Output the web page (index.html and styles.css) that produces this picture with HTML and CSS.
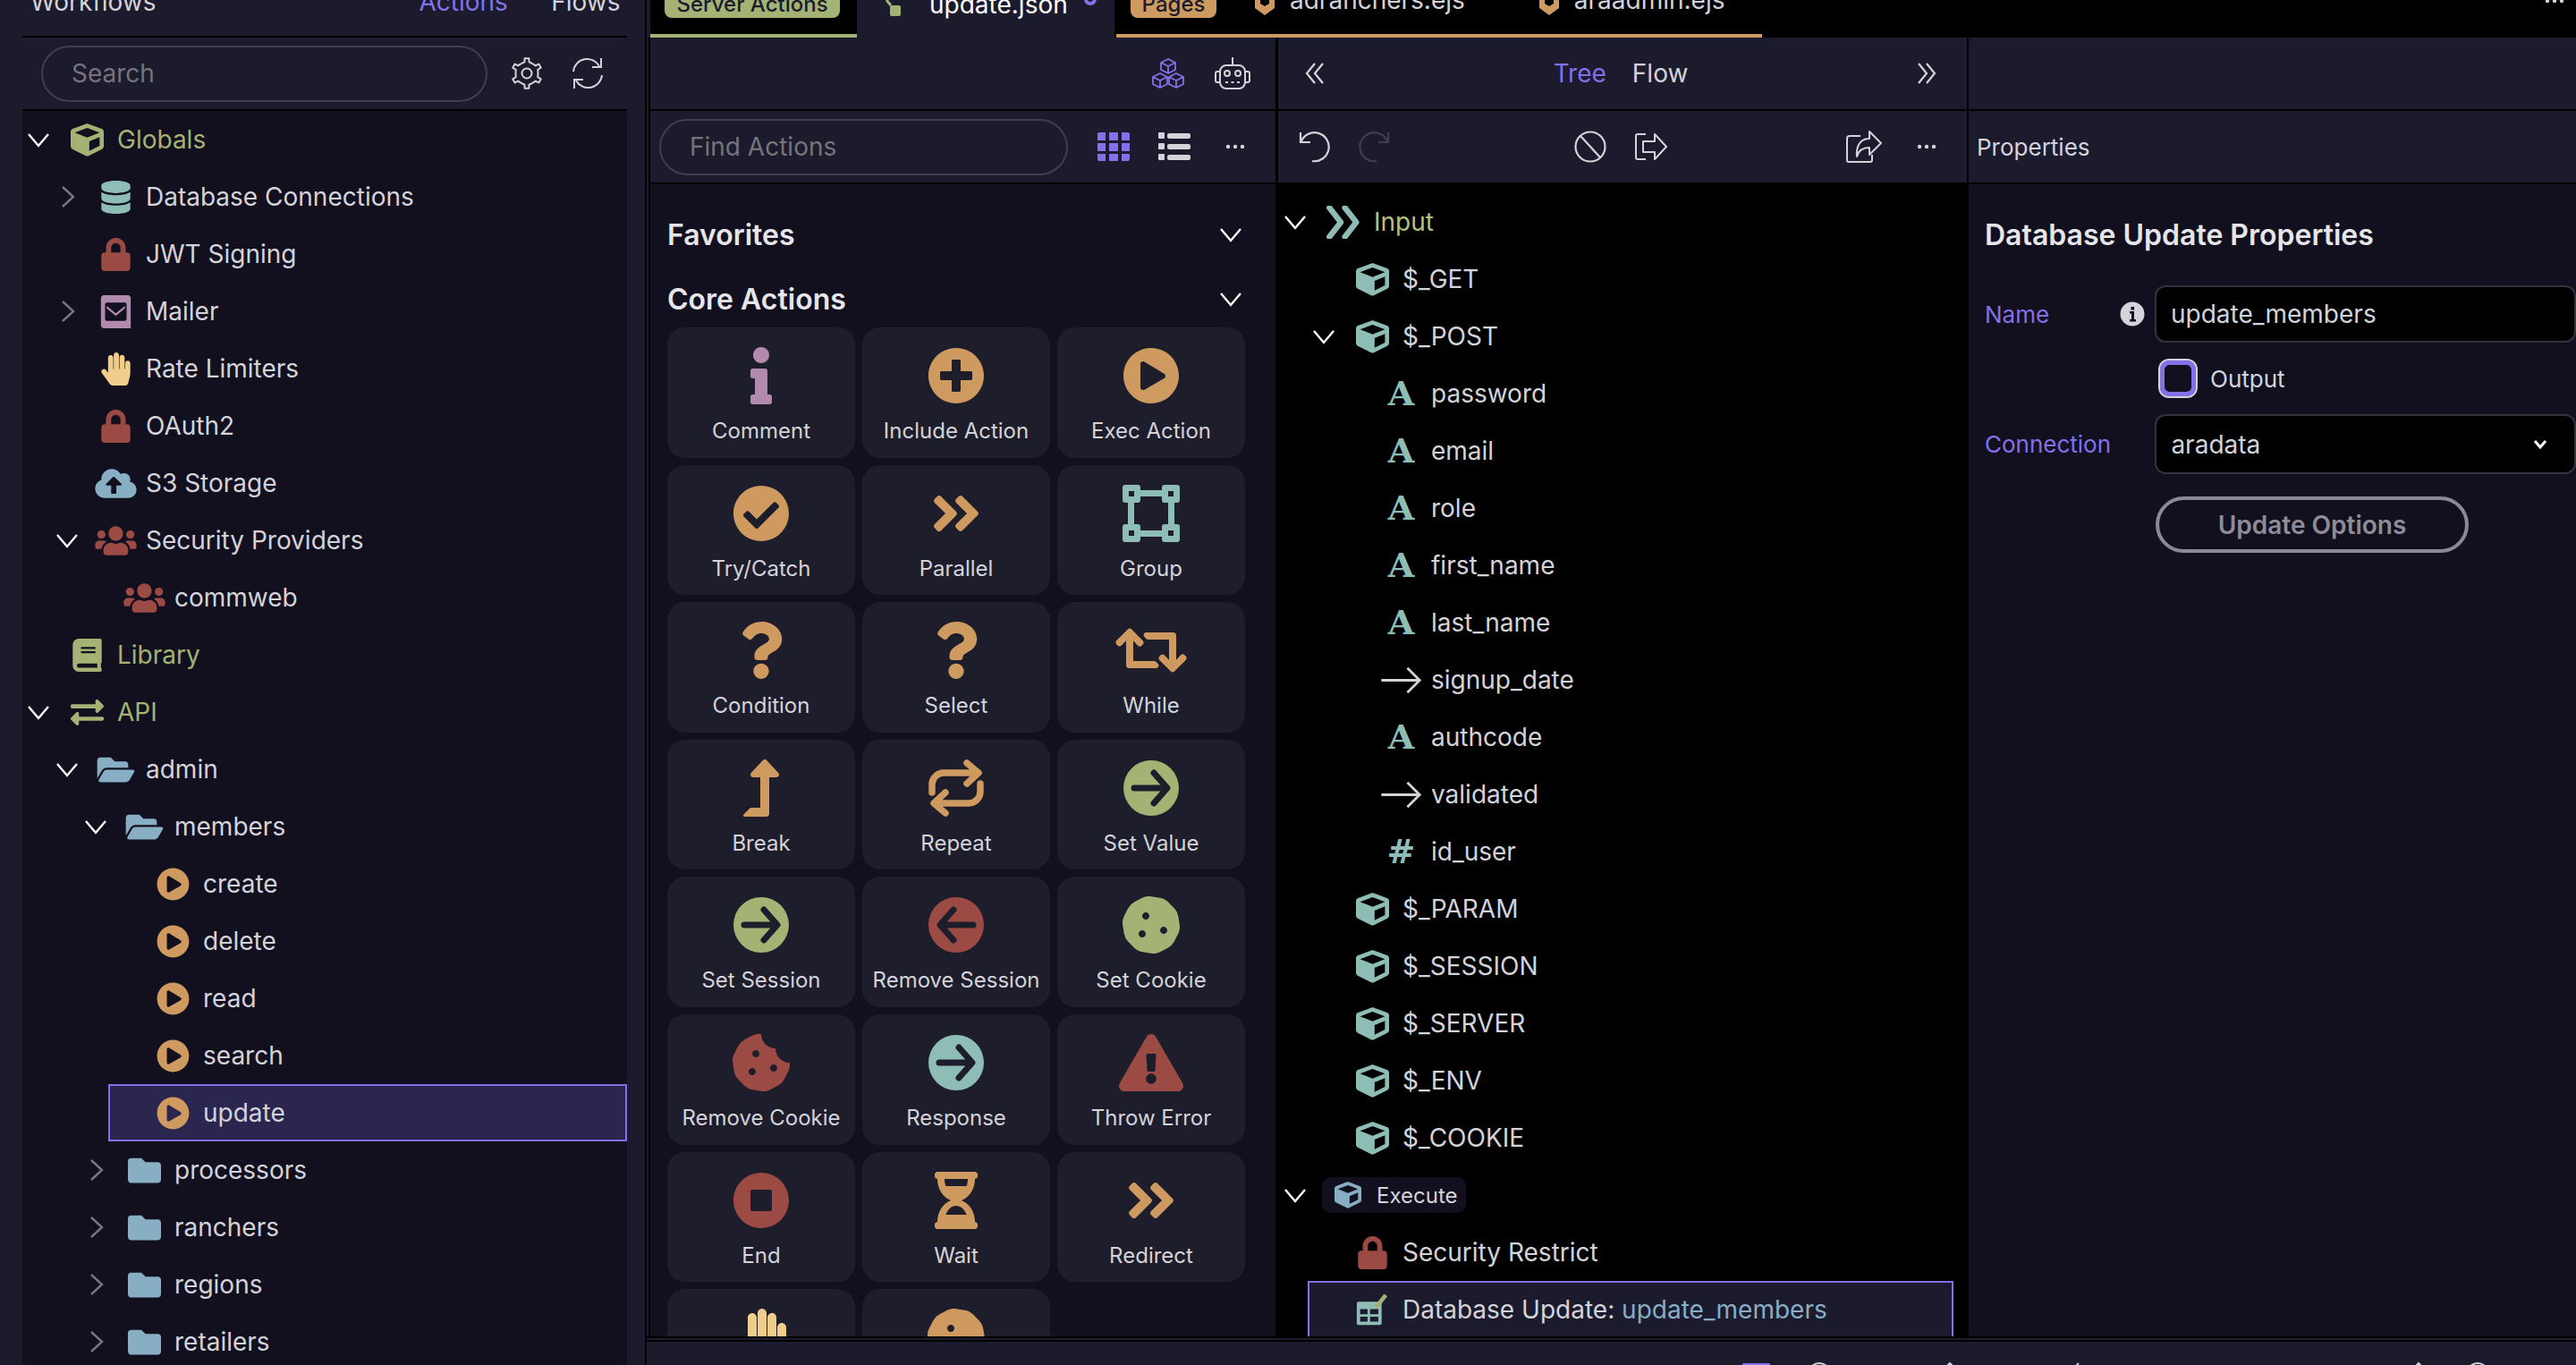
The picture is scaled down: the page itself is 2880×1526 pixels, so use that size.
FILE: index.html
```html
<!DOCTYPE html>
<html>

<head>
  <meta charset="UTF-8">
  <meta name="viewport" content="width=device-width, initial-scale=1.0">
  <title>Server Actions - update.json</title>
  <link rel="stylesheet" href="styles.css">
</head>

<body>
  <!-- icon set -->
  <svg class="sprite" xmlns="http://www.w3.org/2000/svg">
    <symbol id="i-cube" viewBox="0 0 512 512"><path d="M239.1 6.3l-208 78c-18.7 7-31.1 25-31.1 45v225.1c0 18.2 10.3 34.8 26.5 42.9l208 104c13.5 6.8 29.4 6.8 42.9 0l208-104c16.3-8.1 26.5-24.8 26.5-42.9V129.3c0-20-12.4-37.9-31.1-44.9l-208-78C262 2.2 250 2.2 239.1 6.3zM256 68.4l192 72v1.1l-192 78-192-78v-1.1l192-72zm32 356V275.5l160-65v133.9l-160 80z"/></symbol>
    <symbol id="i-lock" viewBox="0 0 448 512"><path d="M400 224h-24v-72C376 68.2 307.8 0 224 0S72 68.2 72 152v72H48c-26.5 0-48 21.5-48 48v192c0 26.5 21.5 48 48 48h352c26.5 0 48-21.5 48-48V272c0-26.5-21.5-48-48-48zm-104 0H152v-72c0-39.7 32.3-72 72-72s72 32.3 72 72v72z"/></symbol>
    <symbol id="i-db" viewBox="0 0 448 512"><path d="M448 73.143v45.714C448 159.143 347.667 192 224 192S0 159.143 0 118.857V73.143C0 32.857 100.333 0 224 0s224 32.857 224 73.143zM448 176v102.857C448 319.143 347.667 352 224 352S0 319.143 0 278.857V176c48.125 33.143 136.208 48.572 224 48.572S399.874 209.143 448 176zm0 160v102.857C448 479.143 347.667 512 224 512S0 479.143 0 438.857V336c48.125 33.143 136.208 48.572 224 48.572S399.874 369.143 448 336z"/></symbol>
    <symbol id="i-mail" viewBox="0 0 36 40"><path fill-rule="evenodd" d="M4 0h28a4 4 0 0 1 4 4v36H4a4 4 0 0 1-4-4V4a4 4 0 0 1 4-4zm3 9a2 2 0 0 0-2 2v18a2 2 0 0 0 2 2h22a2 2 0 0 0 2-2V11a2 2 0 0 0-2-2H7zm0 4 11 9 11-9v3l-11 9-11-9v-3z"/></symbol>
    <symbol id="i-hand" viewBox="0 0 448 512"><path d="M408.781 128.007C386.356 127.578 368 146.36 368 168.79V256h-8V79.79c0-22.43-18.356-41.212-40.781-40.783C297.488 39.423 280 57.169 280 79v177h-8V40.79C272 18.36 253.644-.422 231.219.007 209.488.423 192 18.169 192 40v216h-8V80.79c0-22.43-18.356-41.212-40.781-40.783C121.488 40.423 104 58.169 104 80v235.992l-31.648-43.519c-12.993-17.866-38.009-21.817-55.877-8.823-17.865 12.994-21.815 38.01-8.822 55.877l125.601 172.705A48 48 0 0 0 172.073 512h197.59c22.274 0 41.622-15.324 46.724-37.006l26.508-112.66a192.011 192.011 0 0 0 5.104-43.975V168c.001-21.831-17.487-39.577-39.218-39.993z"/></symbol>
    <symbol id="i-cloud" viewBox="0 0 640 512"><path d="M537.6 226.6c4.1-10.7 6.4-22.4 6.4-34.6 0-53-43-96-96-96-19.7 0-38.1 6-53.3 16.2C367 64.2 315.3 32 256 32c-88.4 0-160 71.6-160 160 0 2.7.1 5.4.2 8.1C40.2 219.8 0 273.2 0 336c0 79.5 64.5 144 144 144h368c70.7 0 128-57.3 128-128 0-61.9-44-113.6-102.4-125.4zM393.4 288H328v112c0 8.8-7.2 16-16 16h-48c-8.8 0-16-7.2-16-16V288h-65.4c-14.3 0-21.4-17.2-11.3-27.3l105.4-105.4c6.2-6.2 16.4-6.2 22.6 0l105.4 105.4c10.1 10.1 2.9 27.3-11.3 27.3z"/></symbol>
    <symbol id="i-users" viewBox="0 0 640 512"><path d="M96 224c35.3 0 64-28.7 64-64s-28.7-64-64-64-64 28.7-64 64 28.7 64 64 64zm448 0c35.3 0 64-28.7 64-64s-28.7-64-64-64-64 28.7-64 64 28.7 64 64 64zm32 32h-64c-17.6 0-33.5 7.1-45.1 18.6 40.3 22.1 68.9 62 75.1 109.4h66c17.7 0 32-14.3 32-32v-32c0-35.3-28.7-64-64-64zm-256 0c61.9 0 112-50.1 112-112S381.9 32 320 32 208 82.1 208 144s50.1 112 112 112zm76.8 32h-8.3c-20.8 10-43.9 16-68.5 16s-47.6-6-68.5-16h-8.3C179.6 288 128 339.6 128 403.2V432c0 26.5 21.5 48 48 48h288c26.5 0 48-21.5 48-48v-28.8c0-63.6-51.6-115.2-115.2-115.2zm-223.7-13.4C161.5 263.1 145.6 256 128 256H64c-35.3 0-64 28.7-64 64v32c0 17.7 14.3 32 32 32h65.9c6.3-47.4 34.9-87.3 75.2-109.4z"/></symbol>
    <symbol id="i-book" viewBox="0 0 448 512"><path d="M448 360V24c0-13.3-10.7-24-24-24H96C43 0 0 43 0 96v320c0 53 43 96 96 96h328c13.3 0 24-10.7 24-24v-16c0-7.5-3.5-14.3-8.9-18.7-4.2-15.4-4.2-59.3 0-74.7 5.4-4.3 8.9-11.1 8.9-18.6zM128 134c0-3.3 2.7-6 6-6h212c3.3 0 6 2.7 6 6v20c0 3.3-2.7 6-6 6H134c-3.3 0-6-2.7-6-6v-20zm0 64c0-3.3 2.7-6 6-6h212c3.3 0 6 2.7 6 6v20c0 3.3-2.7 6-6 6H134c-3.3 0-6-2.7-6-6v-20zm253.4 250H96c-17.7 0-32-14.3-32-32 0-17.6 14.4-32 32-32h285.4c-1.9 17.1-1.9 46.9 0 64z"/></symbol>
    <symbol id="i-exchange" viewBox="0 0 512 512"><path d="M0 168v-16c0-13.255 10.745-24 24-24h360V80c0-21.367 25.899-32.042 40.971-16.971l80 80c9.372 9.373 9.372 24.569 0 33.941l-80 80C409.956 271.982 384 261.456 384 240v-48H24c-13.255 0-24-10.745-24-24zm488 152H128v-48c0-21.314-25.862-32.08-40.971-16.971l-80 80c-9.372 9.373-9.372 24.569 0 33.941l80 80C102.057 463.997 128 453.437 128 432v-48h360c13.255 0 24-10.745 24-24v-16c0-13.255-10.745-24-24-24z"/></symbol>
    <symbol id="i-folder" viewBox="0 0 512 512"><path d="M464 128H272l-64-64H48C21.49 64 0 85.49 0 112v288c0 26.51 21.49 48 48 48h416c26.51 0 48-21.49 48-48V176c0-26.51-21.49-48-48-48z"/></symbol>
    <symbol id="i-folder-open" viewBox="0 0 576 512"><path d="M572.694 292.093L500.27 416.248A63.997 63.997 0 0 1 444.989 448H45.025c-18.523 0-30.064-20.093-20.731-36.093l72.424-124.155A64 64 0 0 1 152 256h399.964c18.523 0 30.064 20.093 20.73 36.093zM152 224h328v-48c0-26.51-21.49-48-48-48H272l-64-64H48C21.49 64 0 85.49 0 112v278.046l69.077-118.418C86.214 242.25 117.989 224 152 224z"/></symbol>
    <symbol id="i-play" viewBox="0 0 512 512"><path d="M256 8C119 8 8 119 8 256s111 248 248 248 248-111 248-248S393 8 256 8zm115.7 272l-176 101c-15.8 8.8-35.7-2.5-35.7-21V152c0-18.4 19.8-29.8 35.7-21l176 107c16.4 9.2 16.4 32.9 0 42z"/></symbol>
    <symbol id="i-plus" viewBox="0 0 512 512"><path d="M256 8C119 8 8 119 8 256s111 248 248 248 248-111 248-248S393 8 256 8zm144 276c0 6.6-5.4 12-12 12h-92v92c0 6.6-5.4 12-12 12h-56c-6.6 0-12-5.4-12-12v-92h-92c-6.6 0-12-5.4-12-12v-56c0-6.6 5.4-12 12-12h92v-92c0-6.6 5.4-12 12-12h56c6.6 0 12 5.4 12 12v92h92c6.6 0 12 5.4 12 12v56z"/></symbol>
    <symbol id="i-check" viewBox="0 0 512 512"><path d="M504 256c0 136.967-111.033 248-248 248S8 392.967 8 256 119.033 8 256 8s248 111.033 248 248zM227.314 387.314l184-184c6.248-6.248 6.248-16.379 0-22.627l-22.627-22.627c-6.248-6.249-16.379-6.249-22.628 0L216 308.118l-70.059-70.059c-6.248-6.248-16.379-6.248-22.628 0l-22.627 22.627c-6.248 6.248-6.248 16.379 0 22.627l104 104c6.249 6.249 16.379 6.249 22.628.001z"/></symbol>
    <symbol id="i-stop" viewBox="0 0 512 512"><path d="M256 8C119 8 8 119 8 256s111 248 248 248 248-111 248-248S393 8 256 8zm96 328c0 8.8-7.2 16-16 16H176c-8.8 0-16-7.2-16-16V176c0-8.8 7.2-16 16-16h160c8.8 0 16 7.2 16 16v160z"/></symbol>
    <symbol id="i-question" viewBox="0 0 384 512"><path d="M202.021 0C122.202 0 70.503 32.703 29.914 91.026c-7.363 10.58-5.093 25.086 5.178 32.874l43.138 32.709c10.373 7.865 25.132 6.026 33.253-4.148 25.049-31.381 43.63-49.449 82.757-49.449 30.764 0 68.816 19.799 68.816 49.631 0 22.552-18.617 34.134-48.993 51.164-35.423 19.86-82.299 44.576-82.299 106.405V320c0 13.255 10.745 24 24 24h72.471c13.255 0 24-10.745 24-24v-5.773c0-42.86 125.268-44.645 125.268-160.627C377.504 66.256 286.902 0 202.021 0zM192 373.459c-38.196 0-69.271 31.075-69.271 69.271 0 38.195 31.075 69.27 69.271 69.27s69.271-31.075 69.271-69.271-31.075-69.27-69.271-69.27z"/></symbol>
    <symbol id="i-info" viewBox="0 0 192 512"><path d="M20 424.229h20V279.771H20c-11.046 0-20-8.954-20-20V212c0-11.046 8.954-20 20-20h112c11.046 0 20 8.954 20 20v212.229h20c11.046 0 20 8.954 20 20V492c0 11.046-8.954 20-20 20H20c-11.046 0-20-8.954-20-20v-47.771c0-11.046 8.954-20 20-20zM96 0C56.235 0 24 32.235 24 72s32.235 72 72 72 72-32.235 72-72S135.764 0 96 0z"/></symbol>
    <symbol id="i-double" viewBox="0 0 448 512"><path d="M224.3 273l-136 136c-9.4 9.4-24.6 9.4-33.9 0l-22.6-22.6c-9.4-9.4-9.4-24.6 0-33.9l96.4-96.4-96.4-96.4c-9.4-9.4-9.4-24.6 0-33.9L54.3 103c9.4-9.4 24.6-9.4 33.9 0l136 136c9.5 9.4 9.5 24.6.1 34zm192-34l-136-136c-9.4-9.4-24.6-9.4-33.9 0l-22.6 22.6c-9.4 9.4-9.4 24.6 0 33.9l96.4 96.4-96.4 96.4c-9.4 9.4-9.4 24.6 0 33.9l22.6 22.6c9.4 9.4 24.6 9.4 33.9 0l136-136c9.4-9.2 9.4-24.4 0-33.8z"/></symbol>
    <symbol id="i-retweet" viewBox="0 0 640 512"><path d="M629.657 343.598L528.971 444.284c-9.373 9.372-24.568 9.372-33.941 0L394.343 343.598c-9.373-9.373-9.373-24.569 0-33.941l10.823-10.823c9.562-9.562 25.133-9.34 34.419.492L480 342.118V160H292.451a24.005 24.005 0 0 1-16.971-7.029l-16-16C244.361 121.851 255.069 96 276.451 96H520c13.255 0 24 10.745 24 24v222.118l40.416-43.792c9.285-9.831 24.856-10.054 34.419-.492l10.823 10.823c9.372 9.372 9.372 24.569-.001 33.941zm-265.138 15.431A23.999 23.999 0 0 0 347.548 352H160V169.881l40.416 43.792c9.286 9.831 24.856 10.054 34.419.491l10.822-10.822c9.373-9.373 9.373-24.569 0-33.941L144.971 67.716c-9.373-9.373-24.569-9.373-33.941 0L10.343 168.402c-9.373 9.373-9.373 24.569 0 33.941l10.822 10.822c9.562 9.562 25.133 9.34 34.419-.491L96 169.881V392c0 13.255 10.745 24 24 24h243.549c21.382 0 32.09-25.851 16.971-40.971l-16.001-16z"/></symbol>
    <symbol id="i-break" viewBox="0 0 320 512"><path d="M313.553 119.669L209.587 7.666c-9.485-10.214-25.676-10.229-35.174 0L70.438 119.669C56.232 134.969 67.062 160 88.025 160H152v272H68.024a11.996 11.996 0 0 0-8.485 3.515l-56 56C-4.021 499.074 1.333 512 12.024 512H208c13.255 0 24-10.745 24-24V160h63.966c20.878 0 31.851-24.969 17.587-40.331z"/></symbol>
    <symbol id="i-cookie" viewBox="0 0 512 512"><path d="M510.37 254.79l-12.08-76.26a132.493 132.493 0 0 0-37.16-72.95l-54.76-54.75c-19.73-19.72-45.18-32.7-72.71-37.05l-76.7-12.15c-27.51-4.36-55.69.11-80.52 12.76L107.32 49.6a132.25 132.25 0 0 0-57.79 57.8l-35.1 68.88a132.602 132.602 0 0 0-12.82 80.94l12.08 76.27a132.493 132.493 0 0 0 37.16 72.95l54.76 54.75a132.087 132.087 0 0 0 72.71 37.05l76.7 12.14c27.51 4.36 55.69-.11 80.52-12.75l69.12-35.21a132.302 132.302 0 0 0 57.79-57.8l35.1-68.87c12.71-24.96 17.2-53.3 12.82-80.96zM176 368c-17.67 0-32-14.33-32-32s14.33-32 32-32 32 14.33 32 32-14.33 32-32 32zm32-160c-17.67 0-32-14.33-32-32s14.33-32 32-32 32 14.33 32 32-14.33 32-32 32zm160 128c-17.67 0-32-14.33-32-32s14.33-32 32-32 32 14.33 32 32-14.33 32-32 32z"/></symbol>
    <symbol id="i-cookie-bite" viewBox="0 0 512 512"><path d="M510.52 255.82c-69.97-.85-126.47-57.69-126.47-127.86-70.17 0-127-56.49-127.86-126.45-27.26-4.14-55.13.3-79.72 12.82l-69.13 35.22a132.221 132.221 0 0 0-57.79 57.81l-35.1 68.88a132.645 132.645 0 0 0-12.82 80.95l12.08 76.27a132.521 132.521 0 0 0 37.16 72.96l54.77 54.76a132.036 132.036 0 0 0 72.71 37.06l76.71 12.15c27.51 4.36 55.7-.11 80.53-12.76l69.13-35.21a132.273 132.273 0 0 0 57.79-57.81l35.1-68.88c12.56-24.64 17.01-52.58 12.91-79.91zM176 368c-17.67 0-32-14.33-32-32s14.33-32 32-32 32 14.33 32 32-14.33 32-32 32zm32-160c-17.67 0-32-14.33-32-32s14.33-32 32-32 32 14.33 32 32-14.33 32-32 32zm160 128c-17.67 0-32-14.33-32-32s14.33-32 32-32 32 14.33 32 32-14.33 32-32 32z"/></symbol>
    <symbol id="i-warn" viewBox="0 0 576 512"><path d="M569.517 440.013C587.975 472.007 564.806 512 527.94 512H48.054c-36.937 0-59.999-40.055-41.577-71.987L246.423 23.985c18.467-32.009 64.72-31.951 83.154 0l239.94 416.028zM288 354c-25.405 0-46 20.595-46 46s20.595 46 46 46 46-20.595 46-46-20.595-46-46-46zm-43.673-165.346l7.418 136c.347 6.364 5.609 11.346 11.982 11.346h48.546c6.373 0 11.635-4.982 11.982-11.346l7.418-136c.375-6.874-5.098-12.654-11.982-12.654h-63.383c-6.884 0-12.356 5.78-11.981 12.654z"/></symbol>
    <symbol id="i-hourglass" viewBox="0 0 384 512"><path d="M360 0H24C10.745 0 0 10.745 0 24v16c0 13.255 10.745 24 24 24 0 90.965 51.016 167.734 120.842 192C75.016 280.266 24 357.035 24 448c-13.255 0-24 10.745-24 24v16c0 13.255 10.745 24 24 24h336c13.255 0 24-10.745 24-24v-16c0-13.255-10.745-24-24-24 0-90.965-51.016-167.734-120.842-192C308.984 231.734 360 154.965 360 64c13.255 0 24-10.745 24-24V24c0-13.255-10.745-24-24-24zm-75.078 384H99.08c17.059-46.797 52.096-80 92.92-80 40.821 0 75.862 33.196 92.922 80zm.019-256H99.078C91.988 108.548 88 86.748 88 64h208c0 22.805-3.987 44.587-11.059 64z"/></symbol>
    <symbol id="i-go-right" viewBox="0 0 64 64"><circle cx="32" cy="32" r="31" fill="currentColor"/><path d="M13 32h36M35 15l15 17-15 17" fill="none" stroke="#1e1d2c" stroke-width="7" stroke-linecap="round" stroke-linejoin="round"/></symbol>
    <symbol id="i-go-left" viewBox="0 0 64 64"><circle cx="32" cy="32" r="31" fill="currentColor"/><path d="M51 32H15M29 15 14 32l15 17" fill="none" stroke="#1e1d2c" stroke-width="7" stroke-linecap="round" stroke-linejoin="round"/></symbol>
    <symbol id="i-group" viewBox="0 0 64 64"><path fill-rule="evenodd" d="M3 0h14a3 3 0 0 1 3 3v3h24V3a3 3 0 0 1 3-3h14a3 3 0 0 1 3 3v14a3 3 0 0 1-3 3h-3v24h3a3 3 0 0 1 3 3v14a3 3 0 0 1-3 3H47a3 3 0 0 1-3-3v-3H20v3a3 3 0 0 1-3 3H3a3 3 0 0 1-3-3V47a3 3 0 0 1 3-3h3V20H3a3 3 0 0 1-3-3V3a3 3 0 0 1 3-3zm17 13v4a3 3 0 0 1-3 3h-4v24h4a3 3 0 0 1 3 3v4h24v-4a3 3 0 0 1 3-3h4V20h-4a3 3 0 0 1-3-3v-4H20zM7 7v6h6V7H7zm44 0v6h6V7h-6zM7 51v6h6v-6H7zm44 0v6h6v-6h-6z"/></symbol>
    <symbol id="i-repeat" viewBox="0 0 64 64"><path d="M5 37V28a13 13 0 0 1 13-13h37M44 4l13 11-13 12M59 27v9a13 13 0 0 1-13 13H9M20 60 7 49l13-12" fill="none" stroke="currentColor" stroke-width="7.5" stroke-linecap="round" stroke-linejoin="round"/></symbol>
    <symbol id="i-table-edit" viewBox="0 0 40 40"><path fill="#8dbdb5" d="M3 10h26a2 2 0 0 1 2 2v24a2 2 0 0 1-2 2H3a2 2 0 0 1-2-2V12a2 2 0 0 1 2-2z"/><path fill="#1c1b2e" d="M5 19h9v6H5zm12 0h10v6H17zM5 28h9v6H5zm12 0h10v6H17z"/><path d="M24 17 36 2" stroke="#a4b274" stroke-width="5"/></symbol>
    <symbol id="i-input" viewBox="0 0 34 32"><path d="M3 2l11 14L3 30M18 2l11 14-11 14" fill="none" stroke="#8dbdb5" stroke-width="5.5" stroke-linecap="round" stroke-linejoin="round"/></symbol>
    <symbol id="i-long-arrow" viewBox="0 0 34 24"><path d="M1 12h31M22 2l10 10-10 10" fill="none" stroke="#d4d3d9" stroke-width="2"/></symbol>
    <symbol id="i-chev-down" viewBox="0 0 24 24"><path d="M1 6l11 13L23 6" fill="none" stroke="currentColor" stroke-width="2.4"/></symbol>
    <symbol id="i-chev-right" viewBox="0 0 24 24"><path d="M7 1l12 11L7 23" fill="none" stroke="currentColor" stroke-width="2.4"/></symbol>
    <symbol id="i-gear" viewBox="0 0 36 36"><g fill="none" stroke="currentColor" stroke-width="2" stroke-linejoin="round"><circle cx="18" cy="18" r="5.5"/><path id="gear-tooth" d="M11.75 7.17 15.5 5.25 15.6 1.2H20.4L20.5 5.25 24.25 7.17"/><path d="M11.75 7.17 15.5 5.25 15.6 1.2H20.4L20.5 5.25 24.25 7.17" transform="rotate(60 18 18)"/><path d="M11.75 7.17 15.5 5.25 15.6 1.2H20.4L20.5 5.25 24.25 7.17" transform="rotate(120 18 18)"/><path d="M11.75 7.17 15.5 5.25 15.6 1.2H20.4L20.5 5.25 24.25 7.17" transform="rotate(180 18 18)"/><path d="M11.75 7.17 15.5 5.25 15.6 1.2H20.4L20.5 5.25 24.25 7.17" transform="rotate(240 18 18)"/><path d="M11.75 7.17 15.5 5.25 15.6 1.2H20.4L20.5 5.25 24.25 7.17" transform="rotate(300 18 18)"/></g></symbol>
    <symbol id="i-refresh" viewBox="0 0 36 36"><path d="M2 16A15.5 15.5 0 0 1 31 10M33 1v10H23M34 20A15.5 15.5 0 0 1 5 26M3 35V25h10" fill="none" stroke="currentColor" stroke-width="2"/></symbol>
    <symbol id="i-cubes" viewBox="0 0 36 34"><path d="M18 1l8 4v8l-8 4-8-4V5zM10 5l8 4 8-4M18 9v8M9 17l8 4v8l-8 4-8-4v-8zM1 21l8 4 8-4M9 25v8M27 17l8 4v8l-8 4-8-4v-8zM19 21l8 4 8-4M27 25v8" fill="none" stroke="currentColor" stroke-width="1.8" stroke-linejoin="round"/></symbol>
    <symbol id="i-robot" viewBox="0 0 40 36"><g fill="none" stroke="currentColor" stroke-width="2"><rect x="6" y="9" width="28" height="26" rx="7"/><path d="M20 9V0M6 16H3a2 2 0 0 0-2 2v8a2 2 0 0 0 2 2h3M34 16h3a2 2 0 0 1 2 2v8a2 2 0 0 1-2 2h-3"/><circle cx="14" cy="18" r="3"/><circle cx="26" cy="18" r="3"/><path d="M12 28h16" stroke-dasharray="3 3.5"/></g></symbol>
    <symbol id="i-grid" viewBox="0 0 36 32"><path d="M0 2a2 2 0 0 1 2-2h7v9H0zM13 0h10v9H13zM27 0h7a2 2 0 0 1 2 2v7h-9zM0 12h9v9H0zM13 12h10v9H13zM27 12h9v9h-9zM0 24h9v8H2a2 2 0 0 1-2-2zM13 24h10v8H13zM27 24h9v6a2 2 0 0 1-2 2h-7z"/></symbol>
    <symbol id="i-list" viewBox="0 0 36 32"><path d="M1 0h5a1 1 0 0 1 1 1v5a1 1 0 0 1-1 1H1a1 1 0 0 1-1-1V1a1 1 0 0 1 1-1zm0 12h5a1 1 0 0 1 1 1v5a1 1 0 0 1-1 1H1a1 1 0 0 1-1-1v-5a1 1 0 0 1 1-1zm0 12h5a1 1 0 0 1 1 1v5a1 1 0 0 1-1 1H1a1 1 0 0 1-1-1v-5a1 1 0 0 1 1-1zM12 1h22a2 2 0 0 1 2 2v2a2 2 0 0 1-2 2H12a2 2 0 0 1-2-2V3a2 2 0 0 1 2-2zm0 12h22a2 2 0 0 1 2 2v2a2 2 0 0 1-2 2H12a2 2 0 0 1-2-2v-2a2 2 0 0 1 2-2zm0 12h22a2 2 0 0 1 2 2v2a2 2 0 0 1-2 2H12a2 2 0 0 1-2-2v-2a2 2 0 0 1 2-2z"/></symbol>
    <symbol id="i-dots" viewBox="0 0 22 6"><circle cx="3" cy="3" r="2.2"/><circle cx="11" cy="3" r="2.2"/><circle cx="19" cy="3" r="2.2"/></symbol>
    <symbol id="i-undo" viewBox="0 0 36 36"><path d="M3 2v11h11M3.500 13A16 16 0 1 1 16 34" fill="none" stroke="currentColor" stroke-width="2.200"/></symbol>
    <symbol id="i-redo" viewBox="0 0 36 36"><path d="M33 2v11H22M32.500 13A16 16 0 1 0 20 34" fill="none" stroke="currentColor" stroke-width="2.200"/></symbol>
    <symbol id="i-ban" viewBox="0 0 36 36"><circle cx="18" cy="18" r="16.500" fill="none" stroke="currentColor" stroke-width="2.200"/><path d="M7 6l22 24" stroke="currentColor" stroke-width="2.200"/></symbol>
    <symbol id="i-export" viewBox="0 0 36 30"><path d="M12 1H3a2 2 0 0 0-2 2v24a2 2 0 0 0 2 2h9M22 1l13 14-13 14v-8H9V9h13z" fill="none" stroke="currentColor" stroke-width="2" stroke-linejoin="round"/></symbol>
    <symbol id="i-share" viewBox="0 0 40 36"><path d="M16 6H4a3 3 0 0 0-3 3v24a2 2 0 0 0 2 2h24a2 2 0 0 0 2-2v-6M26 1l13 13-13 13v-8c-8 0-12 3-14 10-1-12 4-20 14-20z" fill="none" stroke="currentColor" stroke-width="2" stroke-linejoin="round"/></symbol>
    <symbol id="i-dbl-left" viewBox="0 0 22 24"><path d="M11 1 2 12l9 11M20 1l-9 11 9 11" fill="none" stroke="currentColor" stroke-width="2.200"/></symbol>
    <symbol id="i-dbl-right" viewBox="0 0 22 24"><path d="M2 1l9 11-9 11M11 1l9 11-9 11" fill="none" stroke="currentColor" stroke-width="2.200"/></symbol>
    <symbol id="i-shield" viewBox="0 0 22 34"><path fill-rule="evenodd" d="M0 0h22v26l-11 8-11-8zM6 8v13l5 3 5-3v-8H9V8z"/></symbol>
  </svg>

  <div class="app">
    <aside class="side">
      <nav class="side-tabs">
        <a class="side-tab">Workflows</a>
        <a class="side-tab is-on">Server Actions</a>
        <a class="side-tab">App Flows</a>
      </nav>
      <div class="side-search">
        <input class="search-box" type="text" placeholder="Search">
        <svg class="tool tool-gear"><use href="#i-gear"/></svg>
        <svg class="tool tool-refresh"><use href="#i-refresh"/></svg>
      </div>
      <div class="tree side-tree">
        <div class="row l0"><svg class="chev"><use href="#i-chev-down"/></svg><svg class="ico green"><use href="#i-cube"/></svg><span class="green">Globals</span></div>
        <div class="row l1"><svg class="chev dim"><use href="#i-chev-right"/></svg><svg class="ico teal"><use href="#i-db"/></svg><span>Database Connections</span></div>
        <div class="row l1"><span class="chev"></span><svg class="ico red"><use href="#i-lock"/></svg><span>JWT Signing</span></div>
        <div class="row l1"><svg class="chev dim"><use href="#i-chev-right"/></svg><svg class="ico mauve"><use href="#i-mail"/></svg><span>Mailer</span></div>
        <div class="row l1"><span class="chev"></span><svg class="ico yellow"><use href="#i-hand"/></svg><span>Rate Limiters</span></div>
        <div class="row l1"><span class="chev"></span><svg class="ico red"><use href="#i-lock"/></svg><span>OAuth2</span></div>
        <div class="row l1"><span class="chev"></span><svg class="ico blue"><use href="#i-cloud"/></svg><span>S3 Storage</span></div>
        <div class="row l1"><svg class="chev"><use href="#i-chev-down"/></svg><svg class="ico red"><use href="#i-users"/></svg><span>Security Providers</span></div>
        <div class="row l2"><span class="chev"></span><svg class="ico red"><use href="#i-users"/></svg><span>commweb</span></div>
        <div class="row l0"><span class="chev"></span><svg class="ico green"><use href="#i-book"/></svg><span class="green">Library</span></div>
        <div class="row l0"><svg class="chev"><use href="#i-chev-down"/></svg><svg class="ico green"><use href="#i-exchange"/></svg><span class="green">API</span></div>
        <div class="row l1"><svg class="chev"><use href="#i-chev-down"/></svg><svg class="ico blue"><use href="#i-folder-open"/></svg><span>admin</span></div>
        <div class="row l2"><svg class="chev"><use href="#i-chev-down"/></svg><svg class="ico blue"><use href="#i-folder-open"/></svg><span>members</span></div>
        <div class="row l3"><span class="chev"></span><svg class="ico orange"><use href="#i-play"/></svg><span>create</span></div>
        <div class="row l3"><span class="chev"></span><svg class="ico orange"><use href="#i-play"/></svg><span>delete</span></div>
        <div class="row l3"><span class="chev"></span><svg class="ico orange"><use href="#i-play"/></svg><span>read</span></div>
        <div class="row l3"><span class="chev"></span><svg class="ico orange"><use href="#i-play"/></svg><span>search</span></div>
        <div class="row l3 picked"><span class="chev"></span><svg class="ico orange"><use href="#i-play"/></svg><span>update</span></div>
        <div class="row l2"><svg class="chev dim"><use href="#i-chev-right"/></svg><svg class="ico blue"><use href="#i-folder"/></svg><span>processors</span></div>
        <div class="row l2"><svg class="chev dim"><use href="#i-chev-right"/></svg><svg class="ico blue"><use href="#i-folder"/></svg><span>ranchers</span></div>
        <div class="row l2"><svg class="chev dim"><use href="#i-chev-right"/></svg><svg class="ico blue"><use href="#i-folder"/></svg><span>regions</span></div>
        <div class="row l2"><svg class="chev dim"><use href="#i-chev-right"/></svg><svg class="ico blue"><use href="#i-folder"/></svg><span>retailers</span></div>
      </div>
    </aside>

    <main class="main">
      <div class="tabs">
        <div class="tab-group group-green"><span class="badge">Server Actions</span></div>
        <div class="tab-active">
          <svg class="tab-node" viewBox="0 0 20 20"><path d="M2 0l5 6" stroke="#a4b274" stroke-width="3"/><rect x="6" y="6" width="12" height="12" rx="2" fill="#a4b274"/></svg>
          <span class="tab-name">update.json</span>
          <span class="tab-ring"></span>
        </div>
        <div class="tab-group group-orange">
          <span class="badge">Pages</span>
          <svg class="tab-shield"><use href="#i-shield"/></svg>
          <span class="tab-file tab-file-a">adranchers.ejs</span>
          <svg class="tab-shield tab-shield-b"><use href="#i-shield"/></svg>
          <span class="tab-file">araadmin.ejs</span>
        </div>
        <svg class="tab-more"><use href="#i-dots"/></svg>
      </div>

      <div class="work">
        <section class="actions">
          <div class="bar bar-end">
            <svg class="tool tool-cubes"><use href="#i-cubes"/></svg>
            <svg class="tool tool-robot"><use href="#i-robot"/></svg>
          </div>
          <div class="bar find-bar">
            <input class="search-box find-box" type="text" placeholder="Find Actions">
            <svg class="tool tool-grid"><use href="#i-grid"/></svg>
            <svg class="tool tool-list"><use href="#i-list"/></svg>
            <svg class="tool tool-dots"><use href="#i-dots"/></svg>
          </div>
          <div class="palette">
            <div class="pal-head pal-first"><h2>Favorites</h2><svg class="chev"><use href="#i-chev-down"/></svg></div>
            <div class="pal-head"><h2>Core Actions</h2><svg class="chev"><use href="#i-chev-down"/></svg></div>
            <div class="cards">
              <div class="card"><svg class="mauve"><use href="#i-info"/></svg><span>Comment</span></div>
              <div class="card"><svg class="orange"><use href="#i-plus"/></svg><span>Include Action</span></div>
              <div class="card"><svg class="orange"><use href="#i-play"/></svg><span>Exec Action</span></div>
              <div class="card"><svg class="orange"><use href="#i-check"/></svg><span>Try/Catch</span></div>
              <div class="card"><svg class="orange"><use href="#i-double"/></svg><span>Parallel</span></div>
              <div class="card"><svg class="teal"><use href="#i-group"/></svg><span>Group</span></div>
              <div class="card"><svg class="orange"><use href="#i-question"/></svg><span>Condition</span></div>
              <div class="card"><svg class="orange"><use href="#i-question"/></svg><span>Select</span></div>
              <div class="card"><svg class="orange"><use href="#i-retweet"/></svg><span>While</span></div>
              <div class="card"><svg class="orange"><use href="#i-break"/></svg><span>Break</span></div>
              <div class="card"><svg class="orange"><use href="#i-repeat"/></svg><span>Repeat</span></div>
              <div class="card"><svg class="green"><use href="#i-go-right"/></svg><span>Set Value</span></div>
              <div class="card"><svg class="green"><use href="#i-go-right"/></svg><span>Set Session</span></div>
              <div class="card"><svg class="red"><use href="#i-go-left"/></svg><span>Remove Session</span></div>
              <div class="card"><svg class="green"><use href="#i-cookie"/></svg><span>Set Cookie</span></div>
              <div class="card"><svg class="red"><use href="#i-cookie-bite"/></svg><span>Remove Cookie</span></div>
              <div class="card"><svg class="teal"><use href="#i-go-right"/></svg><span>Response</span></div>
              <div class="card"><svg class="red"><use href="#i-warn"/></svg><span>Throw Error</span></div>
              <div class="card"><svg class="red"><use href="#i-stop"/></svg><span>End</span></div>
              <div class="card"><svg class="orange"><use href="#i-hourglass"/></svg><span>Wait</span></div>
              <div class="card"><svg class="orange"><use href="#i-double"/></svg><span>Redirect</span></div>
              <div class="card"><svg class="yellow"><use href="#i-hand"/></svg></div>
              <div class="card"><svg class="orange"><use href="#i-cookie"/></svg></div>
            </div>
          </div>
        </section>

        <section class="steps">
          <div class="bar bar-between">
            <svg class="tool tool-dbl"><use href="#i-dbl-left"/></svg>
            <div class="view-tabs"><span class="purple">Tree</span><span>Flow</span></div>
            <svg class="tool tool-dbl"><use href="#i-dbl-right"/></svg>
          </div>
          <div class="bar step-tools">
            <svg class="tool tool-36"><use href="#i-undo"/></svg>
            <svg class="tool tool-36 tool-off"><use href="#i-redo"/></svg>
            <svg class="tool tool-36 tool-ban"><use href="#i-ban"/></svg>
            <svg class="tool tool-36"><use href="#i-export"/></svg>
            <svg class="tool tool-share"><use href="#i-share"/></svg>
            <svg class="tool tool-dots"><use href="#i-dots"/></svg>
          </div>
          <div class="tree step-tree">
            <div class="row l0"><svg class="chev"><use href="#i-chev-down"/></svg><svg class="ico"><use href="#i-input"/></svg><span class="lime">Input</span></div>
            <div class="row l1"><span class="chev"></span><svg class="ico teal"><use href="#i-cube"/></svg><span>$_GET</span></div>
            <div class="row l1"><svg class="chev"><use href="#i-chev-down"/></svg><svg class="ico teal"><use href="#i-cube"/></svg><span>$_POST</span></div>
            <div class="row l2"><span class="chev"></span><b class="type-mark">A</b><span>password</span></div>
            <div class="row l2"><span class="chev"></span><b class="type-mark">A</b><span>email</span></div>
            <div class="row l2"><span class="chev"></span><b class="type-mark">A</b><span>role</span></div>
            <div class="row l2"><span class="chev"></span><b class="type-mark">A</b><span>first_name</span></div>
            <div class="row l2"><span class="chev"></span><b class="type-mark">A</b><span>last_name</span></div>
            <div class="row l2"><span class="chev"></span><svg class="ico"><use href="#i-long-arrow"/></svg><span>signup_date</span></div>
            <div class="row l2"><span class="chev"></span><b class="type-mark">A</b><span>authcode</span></div>
            <div class="row l2"><span class="chev"></span><svg class="ico"><use href="#i-long-arrow"/></svg><span>validated</span></div>
            <div class="row l2"><span class="chev"></span><b class="type-mark">#</b><span>id_user</span></div>
            <div class="row l1"><span class="chev"></span><svg class="ico teal"><use href="#i-cube"/></svg><span>$_PARAM</span></div>
            <div class="row l1"><span class="chev"></span><svg class="ico teal"><use href="#i-cube"/></svg><span>$_SESSION</span></div>
            <div class="row l1"><span class="chev"></span><svg class="ico teal"><use href="#i-cube"/></svg><span>$_SERVER</span></div>
            <div class="row l1"><span class="chev"></span><svg class="ico teal"><use href="#i-cube"/></svg><span>$_ENV</span></div>
            <div class="row l1"><span class="chev"></span><svg class="ico teal"><use href="#i-cube"/></svg><span>$_COOKIE</span></div>
            <div class="row l0"><svg class="chev"><use href="#i-chev-down"/></svg><div class="pill"><svg class="blue"><use href="#i-cube"/></svg><span>Execute</span></div></div>
            <div class="row l1"><span class="chev"></span><svg class="ico red"><use href="#i-lock"/></svg><span>Security Restrict</span></div>
            <div class="row l1 picked step-picked"><span class="chev"></span><svg class="ico"><use href="#i-table-edit"/></svg><span>Database Update: <span class="blue">update_members</span></span></div>
          </div>
        </section>

        <section class="props">
          <div class="bar"></div>
          <div class="bar props-title">Properties</div>
          <div class="props-body">
            <h2>Database Update Properties</h2>
            <div class="field">
              <label class="purple">Name</label>
              <svg class="info-dot" viewBox="0 0 28 28"><circle cx="14" cy="14" r="13.500" fill="#d4d3d9"/><path d="M11 11h5v9h2v2.500h-7V20h2v-6.500h-2zM12.500 6h3.500v3.500h-3.500z" fill="#12101f"/></svg>
              <input class="text-box" type="text" value="update_members">
            </div>
            <div class="check-line"><span class="check"></span><span>Output</span></div>
            <div class="field">
              <label class="purple">Connection</label>
              <div class="text-box select-box"><span>aradata</span><svg viewBox="0 0 16 12"><path d="M2 2l6 7 6-7" fill="none" stroke="#fff" stroke-width="3"/></svg></div>
            </div>
            <button class="opt-btn" type="button">Update Options</button>
          </div>
        </section>
      </div>

      <div class="status">
        <svg class="status-marks" viewBox="0 0 932 3"><rect x="0" y="0" width="31" height="3" rx="1" fill="#8470e8"/><circle cx="86" cy="12" r="12" fill="none" stroke="#d4d3d9" stroke-width="2"/><path d="M228 4l4-4 4 4M372 4l4-4M752 4l4-4 4 4" fill="none" stroke="#d4d3d9" stroke-width="2"/><circle cx="822" cy="12" r="12" fill="none" stroke="#d4d3d9" stroke-width="2"/></svg>
      </div>
    </main>
  </div>
</body>

</html>
```

FILE: styles.css
```css
* {
  box-sizing: border-box;
}

html,
body {
  margin: 0;
  height: 100%;
  overflow: hidden;
}

body {
  background: #1c1b2e;
  color: #d4d3d9;
  font-family: Inter, "Noto Sans", sans-serif;
  font-size: 28px;
}

.sprite {
  display: none;
}

svg {
  fill: currentColor;
  flex: none;
}

/* colours used all over */
.green { color: #a4b274; }
.lime { color: #b7c07c; }
.teal { color: #8dbdb5; }
.red { color: #9c4a44; }
.orange { color: #cf9a5f; }
.blue { color: #87aec3; }
.mauve { color: #b18aae; }
.yellow { color: #f1cd8c; }
.purple { color: #8470e8; }

.app {
  display: flex;
  height: 1526px;
}

/* left column */
.side {
  width: 721px;
  flex: none;
  display: flex;
  flex-direction: column;
  padding: 0 20px 0 25px;
}

.side-tabs {
  height: 42px;
  flex: none;
  display: flex;
  align-items: flex-end;
  padding: 0 0 20px 9px;
  border-bottom: 2px solid #000;
}

.side-tab {
  line-height: 36px;
}

.side-tab.is-on {
  color: #8470e8;
  margin-left: 294px;
  margin-right: 29px;
}

.side-search {
  height: 82px;
  flex: none;
  display: flex;
  align-items: center;
  padding-left: 21px;
  border-bottom: 2px solid #000;
}

.search-box {
  width: 499px;
  height: 63px;
  padding: 0 32px;
  background: transparent;
  border: 2px solid #3f3e4c;
  border-radius: 32px;
  color: #d4d3d9;
  font-family: inherit;
  font-size: 28px;
  outline: none;
}

.search-box::placeholder {
  color: #75747d;
  opacity: 1;
}

.tool {
  color: #d4d3d9;
}

.tool-gear {
  width: 36px;
  height: 36px;
  margin-left: 26px;
}

.tool-refresh {
  width: 36px;
  height: 36px;
  margin-left: 32px;
}

/* trees */
.tree {
  flex: 1;
  overflow: hidden;
}

.side-tree {
  background: #12101f;
}

.step-tree {
  background: #000;
  padding: 10px 0 0 1px;
}

.row {
  height: 64px;
  display: flex;
  align-items: center;
  padding-left: 6px;
  white-space: nowrap;
}

.l1 { margin-left: 32px; }
.l2 { margin-left: 64px; }
.l3 { margin-left: 96px; }

.chev {
  width: 24px;
  height: 24px;
  color: #fff;
}

.chev.dim {
  color: #77767f;
}

.ico {
  width: 47px;
  height: 37px;
  margin: 0 10px 0 19px;
}

.type-mark {
  width: 47px;
  margin: 0 10px 0 19px;
  text-align: center;
  color: #8dbdb5;
  font-family: "DejaVu Serif", serif;
  font-size: 38px;
  line-height: 40px;
}

.picked {
  height: 64px;
  background: #2a2650;
  border: 2px solid #8470e8;
  padding-left: 4px;
}

.step-picked {
  background: #1c1b2e;
  width: 722px;
}

.pill {
  height: 40px;
  display: flex;
  align-items: center;
  gap: 17px;
  margin-left: 18px;
  padding: 0 9px 0 14px;
  background: #12101f;
  border-radius: 10px;
  font-size: 24px;
}

.pill svg {
  width: 30px;
  height: 30px;
}

/* editor side */
.main {
  flex: 1;
  min-width: 0;
  display: flex;
  flex-direction: column;
  border-left: 2px solid #000;
}

.tabs {
  height: 42px;
  flex: none;
  display: flex;
  margin-left: 4px;
  background: #000;
  white-space: nowrap;
}

.tab-group {
  height: 42px;
  flex: none;
  display: flex;
  align-items: flex-start;
  border-bottom: 4px solid;
  padding-left: 16px;
}

.group-green {
  width: 231px;
  border-color: #a4b274;
}

.group-orange {
  width: 722px;
  margin-left: 2px;
  border-color: #cf9a5f;
}

.badge {
  height: 20px;
  display: flex;
  align-items: flex-end;
  padding: 0 20px 0;
  border-radius: 0 0 8px 8px;
  color: #1c1b2e;
  font-size: 24px;
  font-weight: 500;
  line-height: 30px;
}

.group-green .badge {
  width: 196px;
  background: #a4b274;
  justify-content: center;
}

.group-orange .badge {
  width: 96px;
  background: #cf9a5f;
  justify-content: center;
}

.tab-active {
  width: 288px;
  flex: none;
  display: flex;
  align-items: flex-end;
  padding: 0 0 26px 31px;
  background: #1c1b2e;
  line-height: 36px;
  color: #fff;
  overflow: hidden;
}

.tab-node {
  width: 20px;
  height: 20px;
  margin: 0 0 -4px;
}

.tab-name {
  margin: 0 0 -7px 30px;
}

.tab-ring {
  width: 14px;
  height: 14px;
  margin: 0 0 10px 18px;
  border: 4px solid #8470e8;
  border-radius: 50%;
}

.tab-shield {
  width: 22px;
  height: 34px;
  margin: -17px 0 0 43px;
  color: #cf9a5f;
}

.tab-shield-b {
  margin-left: 83px;
}

.tab-file {
  height: 18px;
  display: flex;
  align-items: flex-end;
  margin-left: 17px;
  line-height: 36px;
}

.tab-more {
  width: 22px;
  height: 6px;
  margin: -2px 0 0 875px;
  color: #d4d3d9;
}

.work {
  height: 1454px;
  flex: none;
  display: flex;
  padding-left: 2px;
  border-bottom: 2px solid #000;
}

.actions {
  width: 701px;
  flex: none;
  display: flex;
  flex-direction: column;
  border-left: 2px solid #000;
}

.bar {
  height: 82px;
  flex: none;
  display: flex;
  align-items: center;
  background: #1c1b2e;
  border-bottom: 2px solid #000;
}

.bar-end {
  justify-content: flex-end;
  padding-right: 28px;
}

.tool-cubes {
  width: 36px;
  height: 34px;
}

.tool-cubes use {
  color: #8470e8;
}

.tool-robot {
  width: 40px;
  height: 36px;
  margin-left: 34px;
}

.find-bar {
  padding-left: 10px;
}

.find-box {
  width: 457px;
}

.tool-grid {
  width: 36px;
  height: 32px;
  margin-left: 33px;
  color: #8470e8;
}

.tool-list {
  width: 36px;
  height: 32px;
  margin-left: 32px;
}

.tool-dots {
  width: 22px;
  height: 6px;
  margin-left: 39px;
}

.palette {
  flex: 1;
  overflow: hidden;
  padding: 0 33px 0 19px;
  background: #12101f;
}

.pal-head {
  height: 72px;
  display: flex;
  align-items: center;
  justify-content: space-between;
}

.pal-first {
  margin-top: 20px;
}

.pal-head h2 {
  margin: 0;
  color: #e6e5ea;
  font-size: 32px;
  font-weight: 600;
}

.pal-head .chev {
  margin-right: 5px;
}

.cards {
  display: grid;
  grid-template-columns: repeat(3, 210px);
  grid-auto-rows: 145.6px;
  gap: 8px;
  margin-top: -4px;
}

.card {
  display: flex;
  flex-direction: column;
  align-items: center;
  padding-top: 22px;
  background: #1e1d2c;
  border-radius: 20px;
  font-size: 24px;
  line-height: 30px;
  white-space: nowrap;
}

.card svg {
  width: 100px;
  height: 64px;
  margin-bottom: 15px;
}

.steps {
  width: 775px;
  flex: none;
  display: flex;
  flex-direction: column;
  background: #000;
  border-left: 3px solid #000;
  border-right: 2px solid #000;
}

.bar-between {
  justify-content: space-between;
  padding: 0 34px 0 30px;
}

.tool-dbl {
  width: 22px;
  height: 24px;
}

.view-tabs {
  display: flex;
  gap: 29px;
}

.step-tools {
  padding-left: 22px;
}

.tool-36 {
  width: 36px;
  height: 36px;
}

.tool-off {
  margin-left: 32px;
  color: #3f3e4c;
}

.tool-ban {
  margin: 0 32px 0 205px;
}

.tool-share {
  width: 40px;
  height: 36px;
  margin-left: 200px;
}

.props {
  flex: 1;
  min-width: 0;
  display: flex;
  flex-direction: column;
  background: #12101f;
}

.props-title {
  padding-left: 9px;
  font-size: 26px;
}

.props-body {
  flex: 1;
  padding-left: 18px;
  border-left: 0;
}

.props-body h2 {
  margin: 37px 0 36px;
  color: #e6e5ea;
  font-size: 32px;
  font-weight: 600;
  line-height: 40px;
}

.field {
  display: flex;
  align-items: center;
  font-size: 26px;
}

.field label {
  width: 152px;
}

.info-dot {
  width: 28px;
  height: 28px;
  margin: 0 11px 0 0;
}

.field:last-of-type label {
  width: 191px;
}

.text-box {
  width: 472px;
  height: 64px;
  padding: 0 16px;
  background: #000;
  border: 2px solid #33333b;
  border-radius: 12px;
  color: #d4d3d9;
  font-family: inherit;
  font-size: 28px;
  outline: none;
}

.select-box {
  height: 67px;
  display: flex;
  align-items: center;
  justify-content: space-between;
}

.select-box svg {
  width: 16px;
  height: 12px;
  margin-right: 14px;
}

.check-line {
  height: 44px;
  display: flex;
  align-items: center;
  gap: 14px;
  margin: 18px 0 18px 194px;
  font-size: 26px;
}

.check {
  width: 44px;
  height: 44px;
  background: #12101f;
  border: 2px solid #d4d3d9;
  border-radius: 12px;
  outline: 5px solid #8470e8;
  outline-offset: -7px;
  box-shadow: inset 0 0 0 5px #8470e8;
}

.opt-btn {
  display: block;
  width: 350px;
  height: 63px;
  margin: 25px 0 0 191px;
  background: transparent;
  border: 4px solid #8b8a94;
  border-radius: 32px;
  color: #8e8d97;
  font-family: inherit;
  font-size: 28px;
  font-weight: 600;
}

.status {
  height: 30px;
  flex: none;
  margin-top: 2px;
  border-top: 2px solid #000;
  overflow: hidden;
  display: flex;
  justify-content: flex-end;
  padding: 24px 0 0;
}

.status-marks {
  width: 932px;
  height: 3px;
  overflow: visible;
}
```
